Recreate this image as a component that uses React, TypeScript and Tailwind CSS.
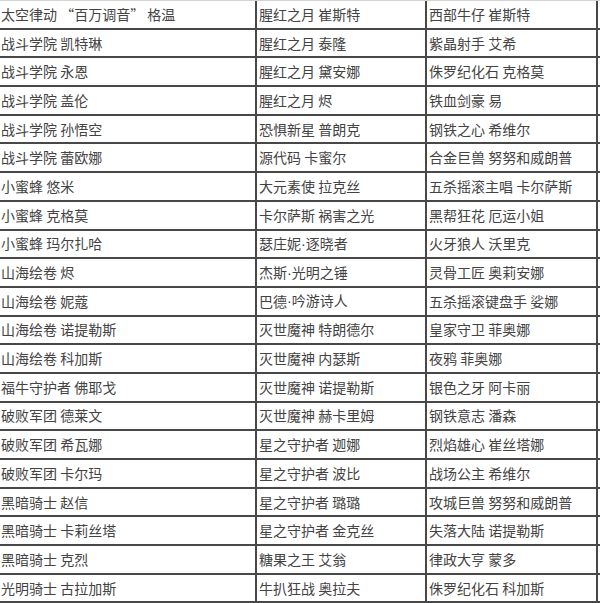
const rows: [string, string, string][] = [
  ['太空律动 “百万调音” 格温', '腥红之月 崔斯特', '西部牛仔 崔斯特'],
  ['战斗学院 凯特琳', '腥红之月 泰隆', '紫晶射手 艾希'],
  ['战斗学院 永恩', '腥红之月 黛安娜', '侏罗纪化石 克格莫'],
  ['战斗学院 盖伦', '腥红之月 烬', '铁血剑豪 易'],
  ['战斗学院 孙悟空', '恐惧新星 普朗克', '钢铁之心 希维尔'],
  ['战斗学院 蕾欧娜', '源代码 卡蜜尔', '合金巨兽 努努和威朗普'],
  ['小蜜蜂 悠米', '大元素使 拉克丝', '五杀摇滚主唱 卡尔萨斯'],
  ['小蜜蜂 克格莫', '卡尔萨斯 祸害之光', '黑帮狂花 厄运小姐'],
  ['小蜜蜂 玛尔扎哈', '瑟庄妮·逐晓者', '火牙狼人 沃里克'],
  ['山海绘卷 烬', '杰斯·光明之锤', '灵骨工匠 奥莉安娜'],
  ['山海绘卷 妮蔻', '巴德·吟游诗人', '五杀摇滚键盘手 娑娜'],
  ['山海绘卷 诺提勒斯', '灭世魔神 特朗德尔', '皇家守卫 菲奥娜'],
  ['山海绘卷 科加斯', '灭世魔神 内瑟斯', '夜鸦 菲奥娜'],
  ['福牛守护者 佛耶戈', '灭世魔神 诺提勒斯', '银色之牙 阿卡丽'],
  ['破败军团 德莱文', '灭世魔神 赫卡里姆', '钢铁意志 潘森'],
  ['破败军团 希瓦娜', '星之守护者 迦娜', '烈焰雄心 崔丝塔娜'],
  ['破败军团 卡尔玛', '星之守护者 波比', '战场公主 希维尔'],
  ['黑暗骑士 赵信', '星之守护者 璐璐', '攻城巨兽 努努和威朗普'],
  ['黑暗骑士 卡莉丝塔', '星之守护者 金克丝', '失落大陆 诺提勒斯'],
  ['黑暗骑士 克烈', '糖果之王 艾翁', '律政大亨 蒙多'],
  ['光明骑士 古拉加斯', '牛扒狂战 奥拉夫', '侏罗纪化石 科加斯'],
]

// the narrow middle dot of the source comes from a latin font
function Cell({ text }: { text: string }) {
  const parts = text.split('·')
  return (
    <>
      {parts.map((p, i) => (
        <span key={i}>
          {i > 0 && <span className="font-['Liberation_Sans',sans-serif]">·</span>}
          {p}
        </span>
      ))}
    </>
  )
}

export default function App() {
  return (
    <div className="w-[600px] h-[603px] overflow-hidden bg-white font-['Noto_Sans_CJK_SC',sans-serif] text-[14px] text-[#434343]">
      <div className="flex flex-col border-t border-[#d4d4d4]">
        {rows.map(([a, b, c], i) => (
          <div
            key={i}
            className="grid grid-cols-[255px_170px_173px] h-[28.7px] border-b-2 border-[#484848]"
          >
            <div className="flex items-center pl-[1px] whitespace-pre">
              <Cell text={a} />
            </div>
            <div className="flex items-center pl-[2px] border-l-2 border-[#484848] whitespace-pre">
              <Cell text={b} />
            </div>
            <div className="flex items-center pl-[2px] border-x-2 border-[#484848] whitespace-pre">
              <Cell text={c} />
            </div>
          </div>
        ))}
      </div>
    </div>
  )
}
